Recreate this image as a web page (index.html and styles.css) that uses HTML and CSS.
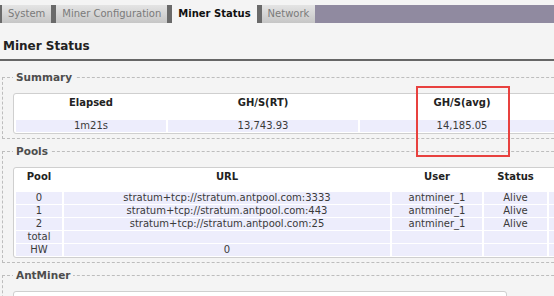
FILE: index.html
```html
<!DOCTYPE html>
<html>

<head>
    <title>Miner Status</title>
    <meta charset="utf-8">
    <meta name="viewport" content="width=device-width, initial-scale=1.0">
    <link rel="stylesheet" href="styles.css">
</head>

<body>
    <div class="page">
        <ul class="tabmenu">
            <li class="tab"><a href="#">System</a></li>
            <li class="tab"><a href="#">Miner Configuration</a></li>
            <li class="tab active"><a href="#">Miner Status</a></li>
            <li class="tab"><a href="#">Network</a></li>
        </ul>

        <h2 class="page-title">Miner Status</h2>

        <fieldset class="cbi-section">
            <legend>Summary</legend>
            <table class="cbi-table summary">
                <tr>
                    <th class="col-elapsed">Elapsed</th>
                    <th class="col-rt">GH/S(RT)</th>
                    <th class="col-avg">GH/S(avg)</th>
                </tr>
                <tr>
                    <td>1m21s</td>
                    <td>13,743.93</td>
                    <td>14,185.05</td>
                </tr>
            </table>
        </fieldset>

        <fieldset class="cbi-section">
            <legend>Pools</legend>
            <table class="cbi-table pools">
                <tr>
                    <th class="col-pool">Pool</th>
                    <th class="col-url">URL</th>
                    <th class="col-user">User</th>
                    <th class="col-status">Status</th>
                    <th class="col-diff"></th>
                </tr>
                <tr>
                    <td>0</td>
                    <td>stratum+tcp://stratum.antpool.com:3333</td>
                    <td>antminer_1</td>
                    <td>Alive</td>
                    <td></td>
                </tr>
                <tr>
                    <td>1</td>
                    <td>stratum+tcp://stratum.antpool.com:443</td>
                    <td>antminer_1</td>
                    <td>Alive</td>
                    <td></td>
                </tr>
                <tr>
                    <td>2</td>
                    <td>stratum+tcp://stratum.antpool.com:25</td>
                    <td>antminer_1</td>
                    <td>Alive</td>
                    <td></td>
                </tr>
                <tr>
                    <td>total</td>
                    <td></td>
                    <td></td>
                    <td></td>
                    <td></td>
                </tr>
                <tr>
                    <td>HW</td>
                    <td>0</td>
                    <td></td>
                    <td></td>
                    <td></td>
                </tr>
            </table>
        </fieldset>

        <fieldset class="cbi-section">
            <legend>AntMiner</legend>
            <table class="cbi-table antminer">
                <tr>
                    <th class="col-chain">Chain#</th>
                    <th class="col-asic">ASIC#</th>
                    <th class="col-freq">Frequency</th>
                    <th class="col-ideal">GH/S(ideal)</th>
                    <th class="col-chainrt">GH/S(RT)</th>
                </tr>
            </table>
        </fieldset>
    </div>

    <!-- highlight drawn on the screenshot -->
    <div class="highlight"></div>
</body>

</html>
```

FILE: styles.css
```css
body {
    margin: 0;
    background-color: #f4f4f4;
    font-family: "DejaVu Sans", Verdana, sans-serif;
    font-size: 10px;
    color: #333;
    overflow: hidden;
    height: 296px;
}

.page {
    width: 640px;
}

.tabmenu {
    display: flex;
    margin: 5px 0 0;
    padding: 0;
    list-style: none;
    background-color: #908aa0;
    height: 18px;
}

.tab {
    border-left: 5px solid #6a6a6a;
    background: linear-gradient(#e4e4e4, #c6c6c6);
}

.tab:first-child {
    margin-left: -3px;
}

.tab a {
    display: block;
    padding: 0 6px;
    line-height: 18px;
    color: #7a7a7a;
    text-decoration: none;
}

.tab.active {
    background: #f4f4f4;
}

.tab.active a {
    color: #111;
    font-weight: bold;
}

.page-title {
    margin: 14px 0 9px;
    padding: 0 0 4px 3px;
    font-size: 12px;
    line-height: 18px;
    color: #222;
    border-bottom: 2px solid #666;
}

.cbi-section {
    margin: 0 0 5px 2px;
    padding: 9px 10px 4px;
    border: 1px dashed #bdbdbd;
    width: 600px;
}

.cbi-section legend {
    padding: 0 3px;
    font-size: 10.5px;
    line-height: 14px;
    font-weight: bold;
    color: #4d4d4d;
}

.cbi-table {
    border-collapse: separate;
    border-spacing: 2px 1px;
    border: 1px solid #cfcfcf;
    border-radius: 3px;
    background-color: #fff;
    white-space: nowrap;
}

.cbi-table th {
    padding: 2px 0 10px;
    line-height: 12px;
    font-weight: bold;
    color: #222;
    text-align: center;
}

.cbi-table.pools th {
    padding-bottom: 8px;
}

.cbi-table td {
    padding: 0;
    height: 12px;
    line-height: 12px;
    background-color: #ededfc;
    text-align: center;
    color: #3a3a3a;
}

.col-elapsed { width: 150px; }
.col-rt { width: 190px; }
.col-avg { width: 204px; }

.col-pool { width: 46px; }
.col-url { width: 326px; }
.col-user { width: 90px; }
.col-status { width: 63px; }
.col-diff { width: 60px; }

.col-chain { width: 60px; }
.col-asic { width: 70px; }
.col-freq { width: 130px; }
.col-ideal { width: 110px; }
.col-chainrt { width: 110px; }

.highlight {
    position: absolute;
    left: 416px;
    top: 86px;
    width: 90px;
    height: 67px;
    border: 2px solid #e8413f;
}
```
